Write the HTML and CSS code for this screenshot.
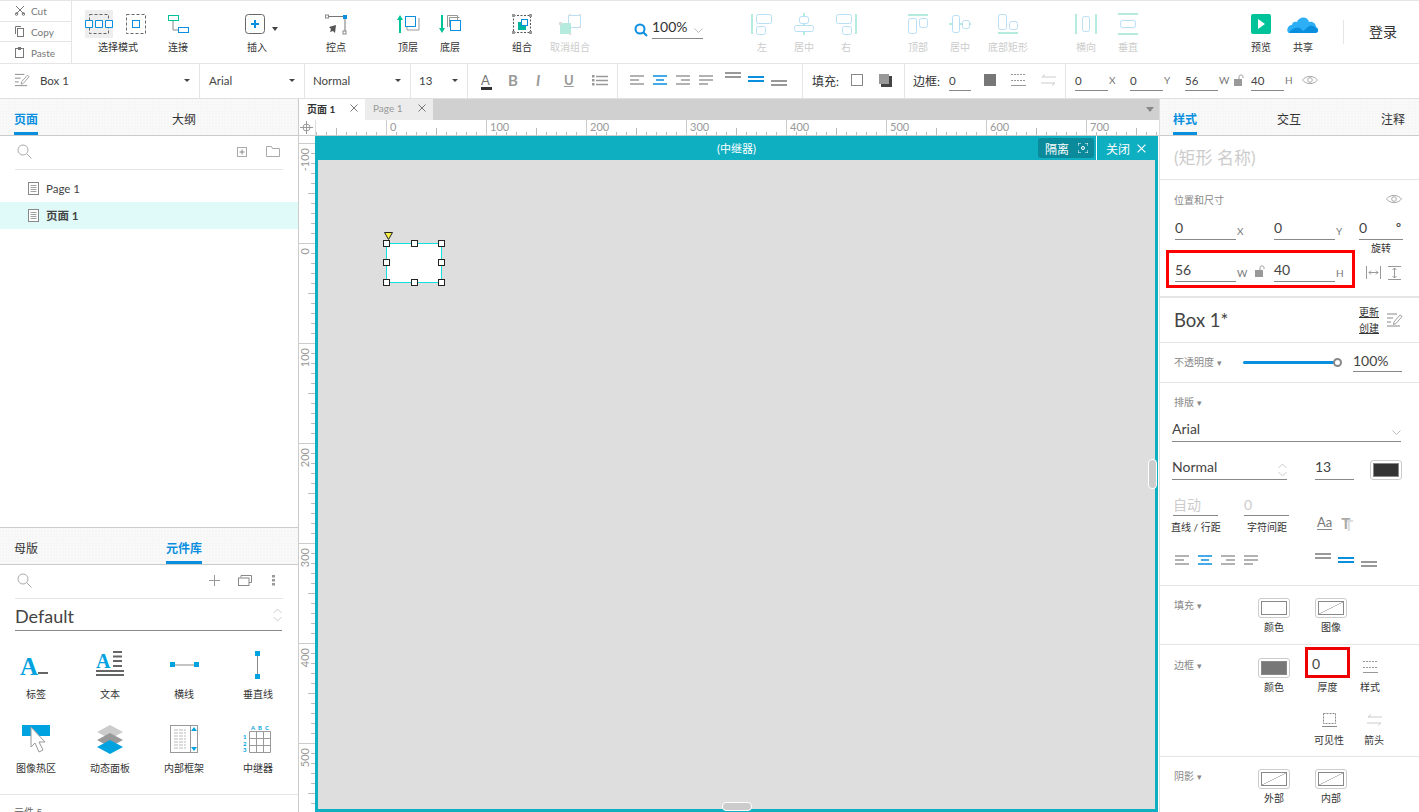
FILE: index.html
```html
<!DOCTYPE html>
<html lang="zh">
<head>
<meta charset="UTF-8">
<title>Axure RP</title>
<link rel="stylesheet" href="styles.css">
</head>
<body>
<svg class="defs">
	<symbol id="al-left" viewBox="0 0 14 10"><path d="M0 1h14M0 5h9M0 9h14" stroke="currentColor" stroke-width="1.6"/></symbol>
	<symbol id="al-center" viewBox="0 0 14 10"><path d="M0 1h14M3 5h8M0 9h14" stroke="currentColor" stroke-width="1.6"/></symbol>
	<symbol id="al-right" viewBox="0 0 14 10"><path d="M0 1h14M5 5h9M0 9h14" stroke="currentColor" stroke-width="1.6"/></symbol>
	<symbol id="al-just" viewBox="0 0 14 10"><path d="M0 1h14M0 5h14M0 9h9" stroke="currentColor" stroke-width="1.6"/></symbol>
	<symbol id="val" viewBox="0 0 16 6"><path d="M0 1h16M0 5h16" stroke="currentColor" stroke-width="1.8"/></symbol>
	<symbol id="eye" viewBox="0 0 16 10"><path d="M.5 5C4 .2 12 .2 15.5 5 12 9.8 4 9.8.5 5z" fill="none" stroke="#aaa"/><circle cx="8" cy="5" r="2.3" fill="none" stroke="#aaa"/></symbol>
	<symbol id="lock" viewBox="0 0 10 12"><rect x="0" y="5" width="8" height="7" fill="#999"/><path d="M5 5V2.5C5 .5 9 .5 9 2.5V4" fill="none" stroke="#999"/></symbol>
	<symbol id="edit" viewBox="0 0 16 14"><path d="M0 1h10M0 5h6M0 9h4M0 13h13" stroke="#888"/><path d="M7 9l6-7 2 1.500-6 7-2.500 1z" fill="#fff" stroke="#888" stroke-width=".8"/></symbol>
	<symbol id="search" viewBox="0 0 15 15"><circle cx="6" cy="6" r="5" fill="none" stroke="#aaa"/><path d="M10 10l4.500 4.500" stroke="#aaa"/></symbol>
	<symbol id="page" viewBox="0 0 11 13"><rect x=".5" y=".5" width="10" height="12" fill="#fff" stroke="#888"/><path d="M2.500 3.500h6M2.500 5.500h6M2.500 7.500h6M2.500 9.500h6" stroke="#888" stroke-width=".8"/></symbol>
	<symbol id="x" viewBox="0 0 8 8"><path d="M.5.500l7 7M7.500.500l-7 7" stroke="currentColor"/></symbol>
	<symbol id="updown" viewBox="0 0 9 14"><path d="M.5 5l4-4 4 4M.5 9l4 4 4-4" fill="none" stroke="#ccc"/></symbol>
	<symbol id="down" viewBox="0 0 9 5"><path d="M.5.500l4 4 4-4" fill="none" stroke="#bbb"/></symbol>
	<symbol id="border-style" viewBox="0 0 15 12"><path d="M0 .500h15M0 6.500h15" stroke="#999" stroke-dasharray="2 1"/><path d="M0 11.500h15" stroke="#999"/></symbol>
	<symbol id="arrows" viewBox="0 0 15 12"><path d="M15 3H1l3-2.500M0 9h14l-3 2.500" fill="none" stroke="#ccc"/></symbol>
</svg>

<header class="toolbar">
	<div class="clip">
		<div class="clip-row"><svg width="10" height="11" viewBox="0 0 10 11"><path d="M1 1l8 8M9 1L1 9" stroke="#777"/><circle cx="1.500" cy="9" r="1.300" fill="none" stroke="#777"/><circle cx="8.500" cy="9" r="1.300" fill="none" stroke="#777"/></svg>Cut</div>
		<div class="clip-row"><svg width="10" height="11" viewBox="0 0 10 11"><path d="M.5 8V.500H6" fill="none" stroke="#777"/><rect x="2.500" y="2.500" width="6" height="8" fill="none" stroke="#777"/></svg>Copy</div>
		<div class="clip-row"><svg width="10" height="11" viewBox="0 0 10 11"><rect x=".5" y="1.500" width="8" height="9" fill="none" stroke="#777"/><rect x="3" y="0" width="3" height="3" fill="#777"/></svg>Paste</div>
	</div>

	<div class="tool w80 m6">
		<svg width="80" height="32" viewBox="0 0 80 32">
			<rect x="7" y="2" width="28" height="28" fill="#eee"/>
			<rect x="11.500" y="6.500" width="19" height="19" fill="none" stroke="#666" stroke-dasharray="3 2"/>
			<path d="M7.500 12.500h7v7h-7zM17.500 12.500h7v7h-7zM27.500 12.500h7v7h-7z" fill="#fff" stroke="#0a8fdf"/>
			<rect x="48.500" y="6.500" width="19" height="19" fill="none" stroke="#666" stroke-dasharray="3 2"/>
			<rect x="54.500" y="12.500" width="7" height="7" fill="none" stroke="#0a8fdf"/>
		</svg>
		<span>选择模式</span>
	</div>
	<div class="tool w40">
		<svg width="32" height="32" viewBox="0 0 32 32"><path d="M11 13v9h6" fill="none" stroke="#888"/><rect x="6.500" y="7.500" width="10" height="5" fill="#fff" stroke="#00c39a"/><rect x="16.500" y="19.500" width="10" height="5" fill="#fff" stroke="#0a8fdf"/></svg>
		<span>连接</span>
	</div>
	<div class="tool m38">
		<svg width="42" height="32" viewBox="0 0 42 32"><rect x="9.500" y="6.500" width="19" height="19" rx="3" fill="none" stroke="#666"/><path d="M19 12v8M15 16h8" stroke="#0a8fdf" stroke-width="2"/><path d="M36 19h6l-3 4z" fill="#444"/></svg>
		<span>插入</span>
	</div>
	<div class="tool m37">
		<svg width="32" height="32" viewBox="0 0 32 32"><path d="M8 8.500h17V24" fill="none" stroke="#777"/><rect x="5.500" y="7" width="3" height="3" fill="#fff" stroke="#888"/><rect x="23" y="7" width="4" height="4" fill="#0a8fdf"/><rect x="23" y="23" width="3" height="3" fill="#fff" stroke="#888"/><path d="M16 17l-1 8-2-2-3 1 1-3-2-2z" fill="#555"/></svg>
		<span>控点</span>
	</div>
	<div class="tool m30">
		<svg width="32" height="32" viewBox="0 0 32 32"><path d="M8 10v15" stroke="#00c39a" stroke-width="2"/><path d="M5 12l3-5 3 5z" fill="#00c39a"/><path d="M15 11v11h12V10" fill="none" stroke="#999"/><rect x="13.500" y="8.500" width="10" height="10" fill="#fff" stroke="#0a8fdf"/></svg>
		<span>顶层</span>
	</div>
	<div class="tool">
		<svg width="32" height="32" viewBox="0 0 32 32"><path d="M8 7v15" stroke="#00c39a" stroke-width="2"/><path d="M5 20l3 5 3-5z" fill="#00c39a"/><path d="M13.500 19V7.500h10V12" fill="none" stroke="#999"/><path d="M15.500 19V9.500h10" fill="none" stroke="#999"/><rect x="16.500" y="12.500" width="10" height="10" fill="#fff" stroke="#0a8fdf"/></svg>
		<span>底层</span>
	</div>
	<div class="tool m30">
		<svg width="32" height="32" viewBox="0 0 32 32"><rect x="7.500" y="7.500" width="17" height="17" fill="none" stroke="#555" stroke-dasharray="2 1.500"/><path d="M6 6h3v3H6zM23 6h3v3h-3zM6 23h3v3H6zM23 23h3v3h-3z" fill="#999"/><rect x="12" y="14" width="8" height="8" fill="#00b5a0"/><rect x="15.500" y="11.500" width="6" height="6" fill="#fff" stroke="#0a8fdf"/></svg>
		<span>组合</span>
	</div>
	<div class="tool off m6">
		<svg width="32" height="32" viewBox="0 0 32 32"><rect x="14.500" y="7.500" width="12" height="12" fill="none" stroke="#b8dff5"/><rect x="6" y="15" width="11" height="11" fill="#b5ebde"/><path d="M5 14h3v3H5zM15 6h2v2h-2zM25 6h2v2h-2zM25 18h2v2h-2zM15 25h2v2h-2z" fill="#ddd"/></svg>
		<span>取消组合</span>
	</div>
	<div class="zoom">
		<svg width="14" height="14" viewBox="0 0 14 14"><circle cx="6" cy="6" r="4.500" fill="none" stroke="#0a8fdf" stroke-width="2"/><path d="M9.500 9.500L13 13" stroke="#0a8fdf" stroke-width="2"/></svg>
		<div class="zoom-value">100%<svg width="9" height="5"><use href="#down"/></svg></div>
	</div>
	<div class="tool off m36">
		<svg width="32" height="32" viewBox="0 0 32 32"><path d="M6 6v20" stroke="#b5ebde" stroke-width="2"/><rect x="10.500" y="6.500" width="15" height="9" rx="2" fill="none" stroke="#b8dff5"/><rect x="10.500" y="18.500" width="9" height="8" rx="2" fill="none" stroke="#b8dff5"/></svg>
		<span>左</span>
	</div>
	<div class="tool off">
		<svg width="32" height="32" viewBox="0 0 32 32"><path d="M16 5v22" stroke="#b5ebde" stroke-width="2"/><rect x="11.500" y="8.500" width="9" height="7" rx="2" fill="#fff" stroke="#b8dff5"/><rect x="6.500" y="17.500" width="19" height="6" rx="2" fill="#fff" stroke="#b8dff5"/></svg>
		<span>居中</span>
	</div>
	<div class="tool off">
		<svg width="32" height="32" viewBox="0 0 32 32"><path d="M26 6v20" stroke="#b5ebde" stroke-width="2"/><rect x="6.500" y="6.500" width="15" height="9" rx="2" fill="none" stroke="#b8dff5"/><rect x="12.500" y="18.500" width="9" height="8" rx="2" fill="none" stroke="#b8dff5"/></svg>
		<span>右</span>
	</div>
	<div class="tool off m30">
		<svg width="32" height="32" viewBox="0 0 32 32"><path d="M6 7h20" stroke="#b5ebde" stroke-width="2"/><rect x="6.500" y="10.500" width="8" height="15" rx="2" fill="none" stroke="#b8dff5"/><rect x="17.500" y="10.500" width="8" height="9" rx="2" fill="none" stroke="#b8dff5"/></svg>
		<span>顶部</span>
	</div>
	<div class="tool off">
		<svg width="32" height="32" viewBox="0 0 32 32"><path d="M5 16h22" stroke="#b5ebde" stroke-width="2"/><rect x="8.500" y="7.500" width="7" height="17" rx="2" fill="#fff" stroke="#b8dff5"/><rect x="18.500" y="12.500" width="7" height="8" rx="2" fill="#fff" stroke="#b8dff5"/></svg>
		<span>居中</span>
	</div>
	<div class="tool off w54">
		<svg width="32" height="32" viewBox="0 0 32 32"><path d="M6 25h20" stroke="#b5ebde" stroke-width="2"/><rect x="6.500" y="6.500" width="8" height="15" rx="2" fill="none" stroke="#b8dff5"/><rect x="17.500" y="13.500" width="8" height="8" rx="2" fill="none" stroke="#b8dff5"/></svg>
		<span>底部矩形</span>
	</div>
	<div class="tool off m30">
		<svg width="32" height="32" viewBox="0 0 32 32"><path d="M6 6v20M26 6v20" stroke="#b5ebde" stroke-width="2"/><rect x="12.500" y="8.500" width="7" height="15" rx="2" fill="none" stroke="#b8dff5"/></svg>
		<span>横向</span>
	</div>
	<div class="tool off">
		<svg width="32" height="32" viewBox="0 0 32 32"><path d="M6 6h20M6 26h20" stroke="#b5ebde" stroke-width="2"/><rect x="8.500" y="12.500" width="15" height="7" rx="2" fill="none" stroke="#b8dff5"/></svg>
		<span>垂直</span>
	</div>
	<div class="tool m91">
		<svg width="32" height="32" viewBox="0 0 32 32"><rect x="6" y="6" width="20" height="20" rx="2" fill="#00c39a"/><path d="M13 11l7 5-7 5z" fill="#fff"/></svg>
		<span>预览</span>
	</div>
	<div class="tool">
		<svg width="32" height="32" viewBox="0 0 32 32"><path d="M2 25c-3-1-2-8 3-8 0-3 3-4 5-3 2-6 11-6 12 0 4-1 7 2 7 5 3 1 3 6-1 6z" fill="#2eaef5"/><path d="M2 25c2-4 6-6 11-5l5 5zM14 25l8-7c3-1 7 1 7 2 3 1 3 5-1 5z" fill="#0a8fdf"/></svg>
		<span>共享</span>
	</div>
	<div class="divider"></div>
	<div class="login">登录</div>
</header>

<div class="formatbar">
	<div class="fcell w200"><svg class="mr" width="15" height="14"><use href="#edit"/></svg><span class="fname">Box 1</span><i class="caret"></i></div>
	<div class="fcell w105"><span class="fname">Arial</span><i class="caret"></i></div>
	<div class="fcell w106"><span class="fname">Normal</span><i class="caret"></i></div>
	<div class="fcell w57"><span class="fname">13</span><i class="caret"></i></div>
	<div class="fcell w150 ticons">
		<span class="ficon color-a">A</span>
		<span class="ficon bold">B</span>
		<span class="ficon ital">I</span>
		<span class="ficon under">U</span>
		<svg width="16" height="11" viewBox="0 0 16 11"><path d="M4 1.500h12M4 5.500h12M4 9.500h12" stroke="#999" stroke-width="1.500"/><path d="M0 0h2.500v2.500H0zM0 4h2.500v2.500H0zM0 8h2.500v2.500H0z" fill="#999"/></svg>
	</div>
	<div class="fcell w185 aligns">
		<svg class="gr" width="14" height="10"><use href="#al-left"/></svg>
		<svg class="bl" width="14" height="10"><use href="#al-center"/></svg>
		<svg class="gr" width="14" height="10"><use href="#al-right"/></svg>
		<svg class="gr" width="14" height="10"><use href="#al-just"/></svg>
		<svg class="gr va-top" width="16" height="6"><use href="#val"/></svg>
		<svg class="bl va-mid" width="16" height="6"><use href="#val"/></svg>
		<svg class="gr va-bot" width="16" height="6"><use href="#val"/></svg>
	</div>
	<div class="fcell w102">
		<span class="flabel">填充:</span>
		<span class="fill-box"></span>
		<svg class="shadow-box" width="13" height="13" viewBox="0 0 13 13"><rect x="2" y="2" width="11" height="11" fill="#444"/><rect width="10" height="10" fill="#999"/></svg>
	</div>
	<div class="fcell w161">
		<span class="flabel short">边框:</span>
		<span class="f-input w22">0</span>
		<span class="border-box"></span>
		<svg class="mls" width="15" height="12"><use href="#border-style"/></svg>
		<svg class="mls" width="15" height="12"><use href="#arrows"/></svg>
	</div>
	<div class="fcell last">
		<span class="f-input w33">0</span><span class="axis a22">X</span>
		<span class="f-input w33">0</span><span class="axis a22">Y</span>
		<span class="f-input w33">56</span><span class="axis a18">W</span>
		<svg class="flock" width="10" height="12"><use href="#lock"/></svg>
		<span class="f-input w33">40</span><span class="axis a18">H</span>
		<svg width="16" height="10"><use href="#eye"/></svg>
	</div>
</div>

<main class="main">
	<aside class="left">
		<div class="pane-top">
			<div class="tabs">
				<span class="tab active w158">页面</span>
				<span class="tab">大纲</span>
			</div>
			<div class="search-row">
				<svg width="15" height="15"><use href="#search"/></svg>
				<svg class="push" width="10" height="10" viewBox="0 0 10 10"><rect x=".5" y=".5" width="9" height="9" fill="none" stroke="#aaa"/><path d="M5 2.500v5M2.500 5h5" stroke="#888"/></svg>
				<svg class="ml22" width="14" height="11" viewBox="0 0 14 11"><path d="M.5 10.500V.500h5l1 2h7v8z" fill="none" stroke="#aaa"/></svg>
			</div>
			<div class="page-row"><svg width="11" height="13"><use href="#page"/></svg>Page 1</div>
			<div class="page-row current"><svg width="11" height="13"><use href="#page"/></svg>页面 1</div>
		</div>
		<div class="pane-bottom">
			<div class="tabs">
				<span class="tab w152">母版</span>
				<span class="tab active">元件库</span>
			</div>
			<div class="search-row tall">
				<svg width="15" height="15"><use href="#search"/></svg>
				<svg class="push" width="11" height="11" viewBox="0 0 11 11"><path d="M5.500 0v11M0 5.500h11" stroke="#999"/></svg>
				<svg class="ml18" width="14" height="11" viewBox="0 0 14 11"><path d="M3 2.500V.500h10.500v7H11" fill="none" stroke="#888"/><rect x=".5" y="3" width="10.500" height="7.500" fill="#fff" stroke="#888"/></svg>
				<svg class="ml20 mr6" width="4" height="11" viewBox="0 0 4 11"><path d="M0 0h3v2.500H0zM0 4h3v2.500H0zM0 8h3v2.500H0z" fill="#999"/></svg>
			</div>
			<div class="lib-select"><span>Default</span><svg width="9" height="14"><use href="#updown"/></svg></div>
			<div class="widgets">
				<div class="widget">
					<svg width="32" height="32" viewBox="0 0 32 32"><text x="0" y="26" class="wA" font-size="25">A</text><rect x="18" y="23" width="10" height="2" fill="#666"/></svg>
					<span>标签</span>
				</div>
				<div class="widget">
					<svg width="32" height="32" viewBox="0 0 32 32"><text x="2" y="19" class="wA" font-size="20">A</text><path d="M19 3h9M19 7.500h9M19 12h9M19 17h9M2 22h28M2 26h28" stroke="#666" stroke-width="1.800"/></svg>
					<span>文本</span>
				</div>
				<div class="widget">
					<svg width="32" height="32" viewBox="0 0 32 32"><path d="M4 16h24" stroke="#888"/><rect x="2" y="13" width="5" height="5" fill="#00a2e0"/><rect x="26" y="13" width="5" height="5" fill="#00a2e0"/></svg>
					<span>横线</span>
				</div>
				<div class="widget">
					<svg width="32" height="32" viewBox="0 0 32 32"><path d="M15.500 4v22" stroke="#888"/><rect x="13" y="2" width="5" height="5" fill="#00a2e0"/><rect x="13" y="25" width="5" height="5" fill="#00a2e0"/></svg>
					<span>垂直线</span>
				</div>
				<div class="widget">
					<svg width="32" height="32" viewBox="0 0 32 32"><rect x="2" y="2" width="28" height="11" fill="#00a2e0"/><path d="M11 4v20l4-4 4 9 4-2-4-8h6z" fill="#fff" stroke="#999"/></svg>
					<span>图像热区</span>
				</div>
				<div class="widget">
					<svg width="32" height="32" viewBox="0 0 32 32"><path d="M16 2l13 7-13 7L3 9z" fill="#ccc"/><path d="M16 10l13 7-13 7L3 17z" fill="#999"/><path d="M16 17l13 7-13 7L3 24z" fill="#00a2e0"/></svg>
					<span>动态面板</span>
				</div>
				<div class="widget">
					<svg width="32" height="32" viewBox="0 0 32 32"><rect x="2.500" y="2.500" width="27" height="27" fill="#fff" stroke="#999"/><path d="M22.500 3v27" stroke="#999"/><path d="M6 7h12M6 10h12M6 13h12M6 16h12M6 19h12M6 22h12M6 25h12" stroke="#bbb" stroke-dasharray="4 1"/><path d="M26 4l3 4h-6zM26 28l3-4h-6z" fill="#00a2e0"/></svg>
					<span>内部框架</span>
				</div>
				<div class="widget">
					<svg width="32" height="32" viewBox="0 0 32 32"><path d="M7.500 8.500h21v21h-21zM14.500 8.500v21M21.500 8.500v21M7.500 15.500h21M7.500 22.500h21" fill="none" stroke="#999"/><text x="9" y="7" class="wT">A</text><text x="16" y="7" class="wT">B</text><text x="23" y="7" class="wT">C</text><text x="1" y="16" class="wT">1</text><text x="1" y="23" class="wT">2</text><text x="1" y="29" class="wT">3</text></svg>
					<span>中继器</span>
				</div>
			</div>
			<div class="clipped">元件 5</div>
		</div>
	</aside>

	<section class="center">
		<div class="doc-tabs">
			<span class="doc-tab active"><b>页面 1</b><svg width="8" height="8"><use href="#x"/></svg></span>
			<span class="doc-tab"><b>Page 1</b><svg width="8" height="8"><use href="#x"/></svg></span>
			<i class="doc-menu"></i>
		</div>
		<div class="ruler-top">
			<div class="corner"><svg width="13" height="13" viewBox="0 0 13 13"><circle cx="6.500" cy="6.500" r="3.500" fill="none" stroke="#999"/><path d="M6.500 0v13M0 6.500h13" stroke="#999"/></svg></div>
			<div class="hticks">
				<div class="htick first"></div>
				<div class="htick">0</div>
				<div class="htick">100</div>
				<div class="htick">200</div>
				<div class="htick">300</div>
				<div class="htick">400</div>
				<div class="htick">500</div>
				<div class="htick">600</div>
				<div class="htick">700</div>
			</div>
		</div>
		<div class="stage">
			<div class="vticks">
				<div class="vtick first"></div>
				<div class="vtick"><span>-100</span></div>
				<div class="vtick"><span>0</span></div>
				<div class="vtick"><span>100</span></div>
				<div class="vtick"><span>200</span></div>
				<div class="vtick"><span>300</span></div>
				<div class="vtick"><span>400</span></div>
				<div class="vtick"><span>500</span></div>
			</div>
			<div class="frame">
				<div class="frame-head">
					<span class="frame-title">(中继器)</span>
					<span class="isolate">隔离<svg width="10" height="10" viewBox="0 0 10 10"><path d="M0 3V0h3M7 0h3v3M10 7v3H7M3 10H0V7" fill="none" stroke="#fff"/><circle cx="5" cy="5" r="1.500" fill="none" stroke="#fff"/></svg></span>
					<span class="frame-close">关闭<svg width="9" height="9"><use href="#x"/></svg></span>
				</div>
				<div class="canvas">
					<svg class="yellow" width="9" height="8" viewBox="0 0 9 8"><path d="M.5.500h8L4.500 7.500z" fill="#f6f040" stroke="#222"/></svg>
					<div class="box">
						<i class="h tl"></i><i class="h tc"></i><i class="h tr"></i>
						<i class="h ml"></i><i class="h mr2"></i>
						<i class="h bl2"></i><i class="h bc"></i><i class="h br"></i>
					</div>
				</div>
				<i class="grip grip-side"></i>
				<i class="grip grip-bottom"></i>
			</div>
		</div>
	</section>

	<aside class="right">
		<div class="tabs">
			<span class="tab active w104">样式</span>
			<span class="tab w104">交互</span>
			<span class="tab">注释</span>
		</div>
		<div class="sec s-name">(矩形 名称)</div>
		<div class="sec s-pos">
			<div class="sec-head"><span class="sec-label">位置和尺寸</span><svg width="16" height="10"><use href="#eye"/></svg></div>
			<div class="pos-row">
				<span class="num w61">0</span><span class="suffix s38">X</span>
				<span class="num w61">0</span><span class="suffix s24">Y</span>
				<span class="rot"><span class="num w44">0<em>°</em></span><small>旋转</small></span>
			</div>
			<div class="wh-row">
				<div class="red-box">
					<span class="num w61">56</span><span class="suffix s12">W</span>
					<svg class="wlock" width="10" height="12"><use href="#lock"/></svg>
					<span class="num w61">40</span><span class="suffix s12">H</span>
				</div>
				<svg class="fit1" width="15" height="13" viewBox="0 0 15 13"><path d="M.5 0v13M14.500 0v13M3 6.500h9M3 6.500l2-2M3 6.500l2 2M12 6.500l-2-2M12 6.500l-2 2" fill="none" stroke="#999"/></svg>
				<svg class="fit2" width="13" height="14" viewBox="0 0 13 14"><path d="M0 .500h13M0 13.500h13M6.500 2v10M6.500 2l-2 2M6.500 2l2 2M6.500 12l-2-2M6.500 12l2-2" fill="none" stroke="#999"/></svg>
			</div>
		</div>
		<div class="sec s-comp">
			<span class="comp-name">Box 1*</span>
			<span class="comp-links"><u>更新</u><u>创建</u></span>
			<svg width="16" height="14"><use href="#edit"/></svg>
		</div>
		<div class="sec s-opa">
			<span class="sec-label arrow w84">不透明度</span>
			<span class="slider"><i></i></span>
			<span class="num w49 opa">100%</span>
		</div>
		<div class="sec s-type">
			<div class="sec-label arrow">排版</div>
			<div class="font-sel">Arial<svg width="9" height="5"><use href="#down"/></svg></div>
			<div class="type-row">
				<span class="font-sel w115">Normal<svg width="9" height="14"><use href="#updown"/></svg></span>
				<span class="font-sel w39">13</span>
				<span class="swatch big"><i class="dark"></i></span>
			</div>
			<div class="spacing-row">
				<span class="spc"><b>自动</b><small>直线 / 行距</small></span>
				<span class="spc"><b>0</b><small>字符间距</small></span>
				<span class="aa">Aa</span>
				<span class="tt">T</span>
			</div>
			<div class="alignrow">
				<svg class="gr" width="14" height="10"><use href="#al-left"/></svg>
				<svg class="bl" width="14" height="10"><use href="#al-center"/></svg>
				<svg class="gr" width="14" height="10"><use href="#al-right"/></svg>
				<svg class="gr" width="14" height="10"><use href="#al-just"/></svg>
				<svg class="gr v1" width="16" height="6"><use href="#val"/></svg>
				<svg class="bl v2" width="16" height="6"><use href="#val"/></svg>
				<svg class="gr v3" width="16" height="6"><use href="#val"/></svg>
			</div>
		</div>
		<div class="sec s-fill">
			<span class="sec-label arrow lab">填充</span>
			<span class="sw-item"><span class="swatch"><i></i></span><small>颜色</small></span>
			<span class="sw-item"><span class="swatch"><i class="slash"></i></span><small>图像</small></span>
		</div>
		<div class="sec s-border">
			<div class="border-row">
				<span class="sec-label arrow lab">边框</span>
				<span class="sw-item"><span class="swatch"><i class="gray"></i></span><small>颜色</small></span>
				<span class="sw-item thick"><span class="red-small">0</span><small>厚度</small></span>
				<span class="sw-item style"><svg width="15" height="12"><use href="#border-style"/></svg><small>样式</small></span>
			</div>
			<div class="border-row r2">
				<span class="sw-item vis"><svg width="15" height="14" viewBox="0 0 15 14"><rect x="1.500" y=".5" width="12" height="10" fill="none" stroke="#888" stroke-dasharray="2 1"/><path d="M0 13.500h15" stroke="#888"/></svg><small>可见性</small></span>
				<span class="sw-item arr"><svg width="15" height="12"><use href="#arrows"/></svg><small>箭头</small></span>
			</div>
		</div>
		<div class="sec s-fill last">
			<span class="sec-label arrow lab">阴影</span>
			<span class="sw-item"><span class="swatch"><i class="slash"></i></span><small>外部</small></span>
			<span class="sw-item"><span class="swatch"><i class="slash"></i></span><small>内部</small></span>
		</div>
	</aside>
</main>
</body>
</html>
```

FILE: styles.css
```css
* {
	box-sizing: border-box;
}

html, body {
	height: 100%;
}

body {
	margin: 0;
	overflow: hidden;
	background: #fff;
	color: #333;
	font-family: Lato, "Noto Sans CJK SC", sans-serif;
	font-size: 12px;
	display: flex;
	flex-direction: column;
}

svg {
	display: block;
	flex: none;
}

.defs {
	width: 0;
	height: 0;
	position: absolute;
}

i, em {
	font-style: normal;
}

/* toolbar */
.toolbar {
	height: 64px;
	flex: none;
	display: flex;
	border-top: 1px solid #e5e5e5;
	border-bottom: 1px solid #e5e5e5;
}

.clip {
	width: 72px;
	flex: none;
	border-right: 1px solid #e5e5e5;
	display: flex;
	flex-direction: column;
}

.clip-row {
	height: 21px;
	display: flex;
	align-items: center;
	gap: 6px;
	padding-left: 15px;
	font-size: 10px;
	color: #777;
	border-bottom: 1px solid #e5e5e5;
}

.clip-row:last-child {
	border-bottom: none;
}

.tool {
	width: 42px;
	flex: none;
	display: flex;
	flex-direction: column;
	align-items: center;
	padding-top: 7px;
}

.tool span {
	font-size: 10px;
	line-height: 12px;
	margin-top: 1px;
	white-space: nowrap;
}

.tool.off span {
	color: #ccc;
}

.w80 { width: 80px; }
.w40 { width: 40px; }
.w54 { width: 54px; }
.m6 { margin-left: 6px; }
.m30 { margin-left: 30px; }
.m36 { margin-left: 36px; }
.m37 { margin-left: 37px; }
.m38 { margin-left: 38px; }
.m91 { margin-left: 91px; }

.zoom {
	width: 72px;
	margin-left: 42px;
	flex: none;
	display: flex;
	align-items: flex-start;
	padding-top: 15px;
	gap: 4px;
	padding-left: 1px;
}

.zoom svg:first-child {
	margin-top: 7px;
}

.zoom-value {
	width: 51px;
	height: 23px;
	font-size: 14px;
	line-height: 22px;
	border-bottom: 1px solid #888;
	display: flex;
	align-items: center;
	justify-content: space-between;
}

.zoom-value svg {
	margin-top: 4px;
}

.divider {
	width: 1px;
	height: 24px;
	margin: 19px 0 0 19px;
	background: #e5e5e5;
}

.login {
	margin: 21px 0 0 25px;
	font-size: 14px;
	line-height: 20px;
}

/* format bar */
.formatbar {
	height: 35px;
	flex: none;
	display: flex;
	border-bottom: 1px solid #e0e0e0;
}

.fcell {
	flex: none;
	height: 34px;
	display: flex;
	align-items: center;
	border-right: 1px solid #e5e5e5;
	padding-left: 9px;
	padding-bottom: 2px;
}

.fcell.last {
	border-right: none;
	flex: 1;
}

.w200 { width: 200px; padding-left: 15px; }
.w105 { width: 105px; }
.w106 { width: 106px; padding-left: 8px; }
.w57 { width: 57px; padding-left: 8px; }
.w150 { width: 150px; padding-left: 13px; }
.w185 { width: 185px; padding-left: 12px; }
.w102 { width: 102px; padding-left: 9px; }
.w161 { width: 161px; padding-left: 8px; }
.mr { margin-right: 10px; }

.fname {
	font-size: 11.500px;
	color: #444;
}

.caret {
	margin-left: auto;
	margin-right: 9px;
	border: 3px solid transparent;
	border-top: 3px solid #444;
	border-bottom: none;
	width: 0;
	height: 0;
	border-left-width: 3.500px;
	border-right-width: 3.500px;
}

.ficon {
	width: 28px;
	font-size: 15px;
	color: #999;
	line-height: 18px;
}

.color-a {
	color: #777;
	font-size: 13px;
	width: 27px;
	position: relative;
}

.color-a::after {
	content: "";
	position: absolute;
	left: 0;
	bottom: -1px;
	width: 11px;
	height: 3px;
	background: #333;
}

.bold {
	font-weight: bold;
}

.ital {
	font-style: italic;
	font-weight: bold;
}

.under {
	text-decoration: underline;
	font-size: 13px;
	font-weight: bold;
}

.gr { color: #999; }
.bl { color: #0a8fdf; }

.aligns svg {
	margin-right: 9px;
}

.aligns .va-top { margin: -11px 7px 0 3px; }
.aligns .va-mid { margin: -3px 7px 0 0; }
.aligns .va-bot { margin: 5px 0 0; }

.flabel {
	font-size: 12px;
	width: 38px;
	flex: none;
}

.flabel.short {
	width: 36px;
}

.fill-box {
	width: 12px;
	height: 12px;
	border: 1px solid #888;
	margin-left: 1px;
}

.shadow-box {
	margin-left: 16px;
}

.f-input {
	font-size: 11.500px;
	color: #444;
	border-bottom: 1px solid #888;
	height: 19px;
	line-height: 17px;
	margin-top: 3px;
}

.w22 { width: 22px; flex: none; }
.w33 { width: 33px; flex: none; }

.border-box {
	width: 12px;
	height: 12px;
	background: #777;
	margin-left: 13px;
}

.mls { margin-left: 15px; }

.axis {
	font-size: 10px;
	color: #777;
	padding-left: 1px;
}

.a22 { width: 22px; }
.a18 { width: 18px; }

.flock {
	margin: 0 7px 0 -2px;
}

/* main area */
.main {
	flex: 1;
	min-height: 0;
	display: flex;
}

.tabs {
	height: 37px;
	flex: none;
	display: flex;
	padding-left: 14px;
	border-bottom: 1px solid #ccc;
	background-color: #f7f7f7;
	background-image: radial-gradient(#fff 0.5px, transparent 0.6px);
	background-size: 3px 3px;
}

.right .tabs {
	padding-left: 13px;
}

.tab {
	font-size: 12px;
	line-height: 42px;
	height: 36px;
	color: #333;
	white-space: nowrap;
}

.tab.active {
	color: #0a8fdf;
	font-weight: bold;
	position: relative;
}

.tab.active::after {
	content: "";
	position: absolute;
	left: 0;
	right: 0;
	bottom: 0;
	height: 3px;
	background: #0a8fdf;
}

.w158 { margin-right: 134px; }
.w152 { margin-right: 128px; }
.w104 { margin-right: 80px; }

/* left panel */
.left {
	width: 299px;
	flex: none;
	display: flex;
	flex-direction: column;
	border-right: 1px solid #ccc;
}

.pane-top {
	flex: 1;
	min-height: 0;
}

.pane-bottom {
	height: 285px;
	flex: none;
	overflow: hidden;
	border-top: 1px solid #ccc;
}

.search-row {
	height: 34px;
	margin: 0 15px;
	display: flex;
	align-items: center;
	padding: 0 0 2px 2px;
	border-bottom: 1px solid #e5e5e5;
}

.push {
	margin-left: auto;
}

.ml22 { margin-left: 19px; margin-right: 3px; }
.ml18 { margin-left: 18px; }
.ml20 { margin-left: 20px; }
.mr6 { margin-right: 7px; }

.page-row {
	height: 27px;
	display: flex;
	align-items: center;
	gap: 7px;
	padding: 0 0 1px 28px;
	font-size: 11.500px;
	color: #444;
}

.search-row + .page-row {
	margin-top: 5px;
}

.page-row.current {
	background: #e0f9f9;
	font-weight: bold;
}

.lib-select {
	height: 32px;
	margin: 0 16px 0 15px;
	display: flex;
	align-items: center;
	justify-content: space-between;
	font-size: 18px;
	color: #444;
	border-bottom: 1px solid #888;
}

.lib-select span {
	padding-top: 2px;
}

.widgets {
	display: grid;
	grid-template-columns: repeat(4, 74px);
	grid-auto-rows: 74px;
	margin-left: -1px;
	padding-top: 18px;
	height: 164px;
	border-bottom: 1px solid #e5e5e5;
}

.widget {
	display: flex;
	flex-direction: column;
	align-items: center;
}

.widget span {
	font-size: 10px;
	line-height: 12px;
	margin-top: 7px;
}

.wA {
	font-family: "Liberation Serif", serif;
	font-weight: bold;
	fill: #00a2e0;
}

.wT {
	font-family: Lato, sans-serif;
	font-size: 6px;
	font-weight: bold;
	fill: #00a2e0;
}

.clipped {
	padding: 9px 0 0 14px;
	font-size: 10px;
	color: #666;
}

/* center */
.center {
	flex: 1;
	min-width: 0;
	display: flex;
	flex-direction: column;
}

.doc-tabs {
	height: 21px;
	flex: none;
	background: #d0d0d0;
	display: flex;
}

.doc-tab {
	height: 21px;
	width: 68px;
	padding: 0 7px 3px 8px;
	background: #ececec;
	color: #999;
	display: flex;
	align-items: center;
	justify-content: space-between;
	font-size: 10px;
}

.doc-tab b {
	font-weight: normal;
}

.doc-tab.active {
	width: 66px;
	background: #fff;
	color: #333;
}

.doc-tab.active b {
	font-weight: bold;
}

.doc-tab svg {
	color: #777;
}

.doc-menu {
	margin: 8px 5px 0 auto;
	width: 0;
	height: 0;
	border: 4px solid transparent;
	border-top: 5px solid #888;
	border-bottom: none;
}

.ruler-top {
	height: 16px;
	flex: none;
	display: flex;
	border-bottom: 1px solid #ccc;
}

.corner {
	width: 17px;
	flex: none;
	border-right: 1px solid #ddd;
	padding: 1px 0 0 1px;
}

.hticks {
	flex: 1;
	min-width: 0;
	overflow: hidden;
	display: flex;
}

.htick {
	width: 100px;
	flex: none;
	height: 15px;
	border-left: 1px solid #ccc;
	padding-left: 3px;
	font-size: 11px;
	line-height: 13px;
	color: #999;
	background-image: linear-gradient(#bbb, #bbb), repeating-linear-gradient(90deg, transparent 0 9px, #bbb 9px 10px);
	background-size: 1px 7px, 100% 3px;
	background-position: 49px bottom, 0 bottom;
	background-repeat: no-repeat;
}

.htick.first {
	margin-left: -30px;
}

.stage {
	flex: 1;
	min-height: 0;
	display: flex;
}

.vticks {
	width: 16px;
	flex: none;
	overflow: hidden;
	display: flex;
	flex-direction: column;
}

.vtick {
	height: 100px;
	flex: none;
	border-top: 1px solid #ccc;
	font-size: 11px;
	color: #999;
	background-image: linear-gradient(#bbb, #bbb), repeating-linear-gradient(180deg, transparent 0 9px, #bbb 9px 10px);
	background-size: 7px 1px, 4px 100%;
	background-position: right 49px, right 0;
	background-repeat: no-repeat;
}

.vtick span {
	display: block;
	writing-mode: vertical-rl;
	transform: rotate(180deg);
	line-height: 12px;
	margin-top: 4px;
}

.vtick.first {
	margin-top: -93px;
}

.frame {
	flex: 1;
	min-width: 0;
	background: #0fafc2;
	border: 3px solid #0fafc2;
	border-top: none;
	margin-right: 1px;
	display: flex;
	flex-direction: column;
	position: relative;
}

.frame-head {
	height: 24px;
	flex: none;
	display: flex;
	align-items: center;
	justify-content: flex-end;
	color: #fff;
	position: relative;
}

.frame-title {
	position: absolute;
	left: 0;
	right: 0;
	text-align: center;
	font-size: 11px;
}

.isolate {
	position: relative;
	width: 56px;
	height: 20px;
	background: #0a8a9a;
	border-radius: 3px;
	display: flex;
	align-items: center;
	gap: 9px;
	padding-left: 7px;
	font-size: 12px;
}

.frame-close {
	position: relative;
	width: 62px;
	height: 24px;
	margin-left: 2px;
	margin-right: -3px;
	border-left: 1px solid #fff;
	display: flex;
	align-items: center;
	gap: 7px;
	padding-left: 9px;
	font-size: 12px;
}

.canvas {
	flex: 1;
	min-height: 0;
	background: #dedede;
	position: relative;
}

.yellow {
	position: absolute;
	left: 66px;
	top: 72px;
}

.box {
	position: absolute;
	left: 68px;
	top: 83px;
	width: 56px;
	height: 40px;
	background: #fff;
	border: 1px solid #0fe0e0;
}

.h {
	position: absolute;
	width: 7px;
	height: 7px;
	background: #fff;
	border: 1px solid #222;
}

.tl { left: -4px; top: -4px; }
.tc { left: 24px; top: -4px; }
.tr { right: -4px; top: -4px; }
.ml { left: -4px; top: 15px; }
.mr2 { right: -4px; top: 15px; }
.bl2 { left: -4px; bottom: -4px; }
.bc { left: 24px; bottom: -4px; }
.br { right: -4px; bottom: -4px; }

.grip {
	position: absolute;
	background: #ccc;
	border: 1px solid #fff;
	border-radius: 4px;
}

.grip-side {
	right: -2px;
	top: 323px;
	width: 9px;
	height: 30px;
}

.grip-bottom {
	left: 404px;
	bottom: -2px;
	width: 30px;
	height: 9px;
}

/* right panel */
.right {
	width: 260px;
	flex: none;
	display: flex;
	flex-direction: column;
	border-left: 1px solid #ddd;
	overflow: hidden;
}

.sec {
	flex: none;
	border-bottom: 1px solid #e5e5e5;
}

.sec.last {
	border-bottom: none;
}

.sec-label {
	font-size: 10px;
	line-height: 12px;
	color: #888;
}

.arrow::after {
	content: "▾";
	font-size: 9px;
	margin-left: 3px;
}

.s-name {
	height: 44px;
	padding: 9px 0 0 14px;
	font-size: 17px;
	line-height: 26px;
	color: #ccc;
}

.s-pos {
	height: 118px;
	border-bottom: 2px solid #e5e5e5;
	padding-top: 14px;
}

.sec-head {
	display: flex;
	justify-content: space-between;
	padding: 0 17px 0 14px;
}

.pos-row {
	display: flex;
	padding: 11px 0 0 15px;
	height: 38px;
}

.num {
	display: block;
	flex: none;
	height: 23px;
	font-size: 14px;
	line-height: 21px;
	color: #444;
	border-bottom: 1px solid #888;
	position: relative;
}

.w61 { width: 61px; }
.w44 { width: 44px; }
.w49 { width: 49px; }

.num em {
	position: absolute;
	right: 2px;
	top: -1px;
	font-size: 12px;
	font-weight: bold;
}

.suffix {
	font-size: 10px;
	color: #777;
	padding: 8px 0 0 1px;
	flex: none;
}

.s38 { width: 38px; }
.s24 { width: 24px; }
.s12 { width: 19px; }

.rot {
	display: flex;
	flex-direction: column;
	align-items: center;
}

.rot small {
	font-size: 10px;
	line-height: 12px;
	margin-top: 2px;
}

.wh-row {
	display: flex;
	align-items: flex-start;
	padding-left: 6px;
	margin-top: 6px;
}

.red-box {
	width: 189px;
	height: 38px;
	flex: none;
	border: 3px solid #f00;
	padding: 6px 0 0 6px;
	display: flex;
}

.wlock {
	margin: 6px 9px 0 0;
}

.fit1 { margin: 16px 0 0 11px; }
.fit2 { margin: 16px 0 0 7px; }

.s-comp {
	height: 45px;
	display: flex;
	align-items: center;
	padding-left: 14px;
}

.comp-name {
	font-size: 18.500px;
	color: #444;
}

.comp-links {
	margin-left: auto;
	display: flex;
	flex-direction: column;
	align-items: center;
	font-size: 10px;
	line-height: 16px;
	margin-right: 8px;
}

.s-comp svg {
	margin-right: 16px;
}

.s-opa {
	height: 40px;
	display: flex;
	align-items: center;
	padding-left: 14px;
}

.w84 {
	width: 69px;
	flex: none;
}

.slider {
	width: 95px;
	height: 3px;
	border-radius: 2px;
	background: #0a8fdf;
	position: relative;
	flex: none;
}

.slider i {
	position: absolute;
	right: -4px;
	top: -3px;
	width: 9px;
	height: 9px;
	border-radius: 50%;
	background: #fff;
	border: 2px solid #888;
}

.opa {
	margin-left: 15px;
	margin-top: -4px;
	height: 22px;
}

.s-type {
	height: 203px;
	padding: 13px 0 0 12px;
}

.s-type > .sec-label {
	margin-left: 2px;
}

.font-sel {
	width: 229px;
	height: 25px;
	margin-top: 8px;
	font-size: 14px;
	line-height: 24px;
	color: #444;
	border-bottom: 1px solid #888;
	display: flex;
	justify-content: space-between;
	align-items: center;
	flex: none;
}

.font-sel > svg:only-child {
	margin-top: 6px;
}

.type-row {
	display: flex;
	align-items: flex-end;
	margin-top: 13px;
}

.type-row .font-sel {
	margin-top: 0;
}

.font-sel.w115 { width: 115px; }
.font-sel.w39 { width: 39px; margin-left: 28px; }

.swatch {
	width: 32px;
	height: 20px;
	flex: none;
	border: 1px solid #ccc;
	border-radius: 3px;
	padding: 2px;
	display: block;
}

.swatch i {
	display: block;
	height: 100%;
	border: 1px solid #888;
}

.swatch.big {
	margin-left: 16px;
}

.swatch .dark {
	background: #333;
}

.swatch .gray {
	background: #777;
}

.swatch .slash {
	background: linear-gradient(to top left, transparent calc(50% - 0.6px), #999 50%, transparent calc(50% + 0.6px));
}

.spacing-row {
	display: flex;
	margin: 14px 0 0 1px;
	align-items: flex-start;
}

.spc {
	width: 45px;
	flex: none;
	margin-right: 26px;
	display: flex;
	flex-direction: column;
}

.spc b {
	font-weight: normal;
	font-size: 14px;
	line-height: 21px;
	color: #ccc;
	border-bottom: 1px solid #888;
}

.spc small {
	font-size: 10px;
	line-height: 12px;
	white-space: nowrap;
	margin-top: 5px;
	margin-left: -2px;
}

.spc + .spc small {
	margin-left: 3px;
}

.aa {
	font-size: 13px;
	color: #777;
	border-bottom: 1px solid #888;
	line-height: 14px;
	height: 15px;
	margin: 21px 0 0 2px;
}

.tt {
	font-size: 15px;
	font-weight: bold;
	color: #aaa;
	line-height: 15px;
	margin: 22px 0 0 9px;
	text-shadow: 3px 2px 0 #ddd;
}

.alignrow {
	display: flex;
	align-items: flex-start;
	padding-left: 3px;
	margin-top: 22px;
}

.alignrow svg {
	margin-right: 9px;
}

.alignrow .v1 { margin: -2px 7px 0 48px; }
.alignrow .v2 { margin: 2px 7px 0 0; }
.alignrow .v3 { margin: 6px 0 0; }

.s-fill {
	height: 59px;
	padding: 12px 0 0 14px;
	display: flex;
}

.lab {
	width: 84px;
	flex: none;
	padding-top: 1px;
}

.sw-item {
	width: 32px;
	flex: none;
	display: flex;
	flex-direction: column;
	align-items: center;
	margin-right: 25px;
}

.sw-item small {
	font-size: 10px;
	line-height: 12px;
	margin-top: 3px;
	white-space: nowrap;
}

.s-border {
	height: 112px;
	padding: 13px 0 0 14px;
}

.border-row {
	display: flex;
}

.sw-item.thick {
	margin-left: -10px;
	width: 45px;
	margin-right: 4px;
}

.red-small {
	width: 45px;
	height: 31px;
	flex: none;
	border: 3px solid #e00;
	margin-top: -11px;
	font-size: 14px;
	line-height: 28px;
	padding-left: 4px;
	color: #444;
}

.style svg {
	margin: 3px 0 8px;
}

.sw-item.style small {
	margin-top: 0;
}

.r2 {
	padding-left: 139px;
	margin-top: 20px;
}

.sw-item.vis {
	margin-right: 13px;
}

.sw-item.vis small, .sw-item.arr small {
	margin-top: 7px;
}

.arr svg {
	margin: 1px 0;
}

.sw-item.arr {
	margin-right: 0;
}
```
